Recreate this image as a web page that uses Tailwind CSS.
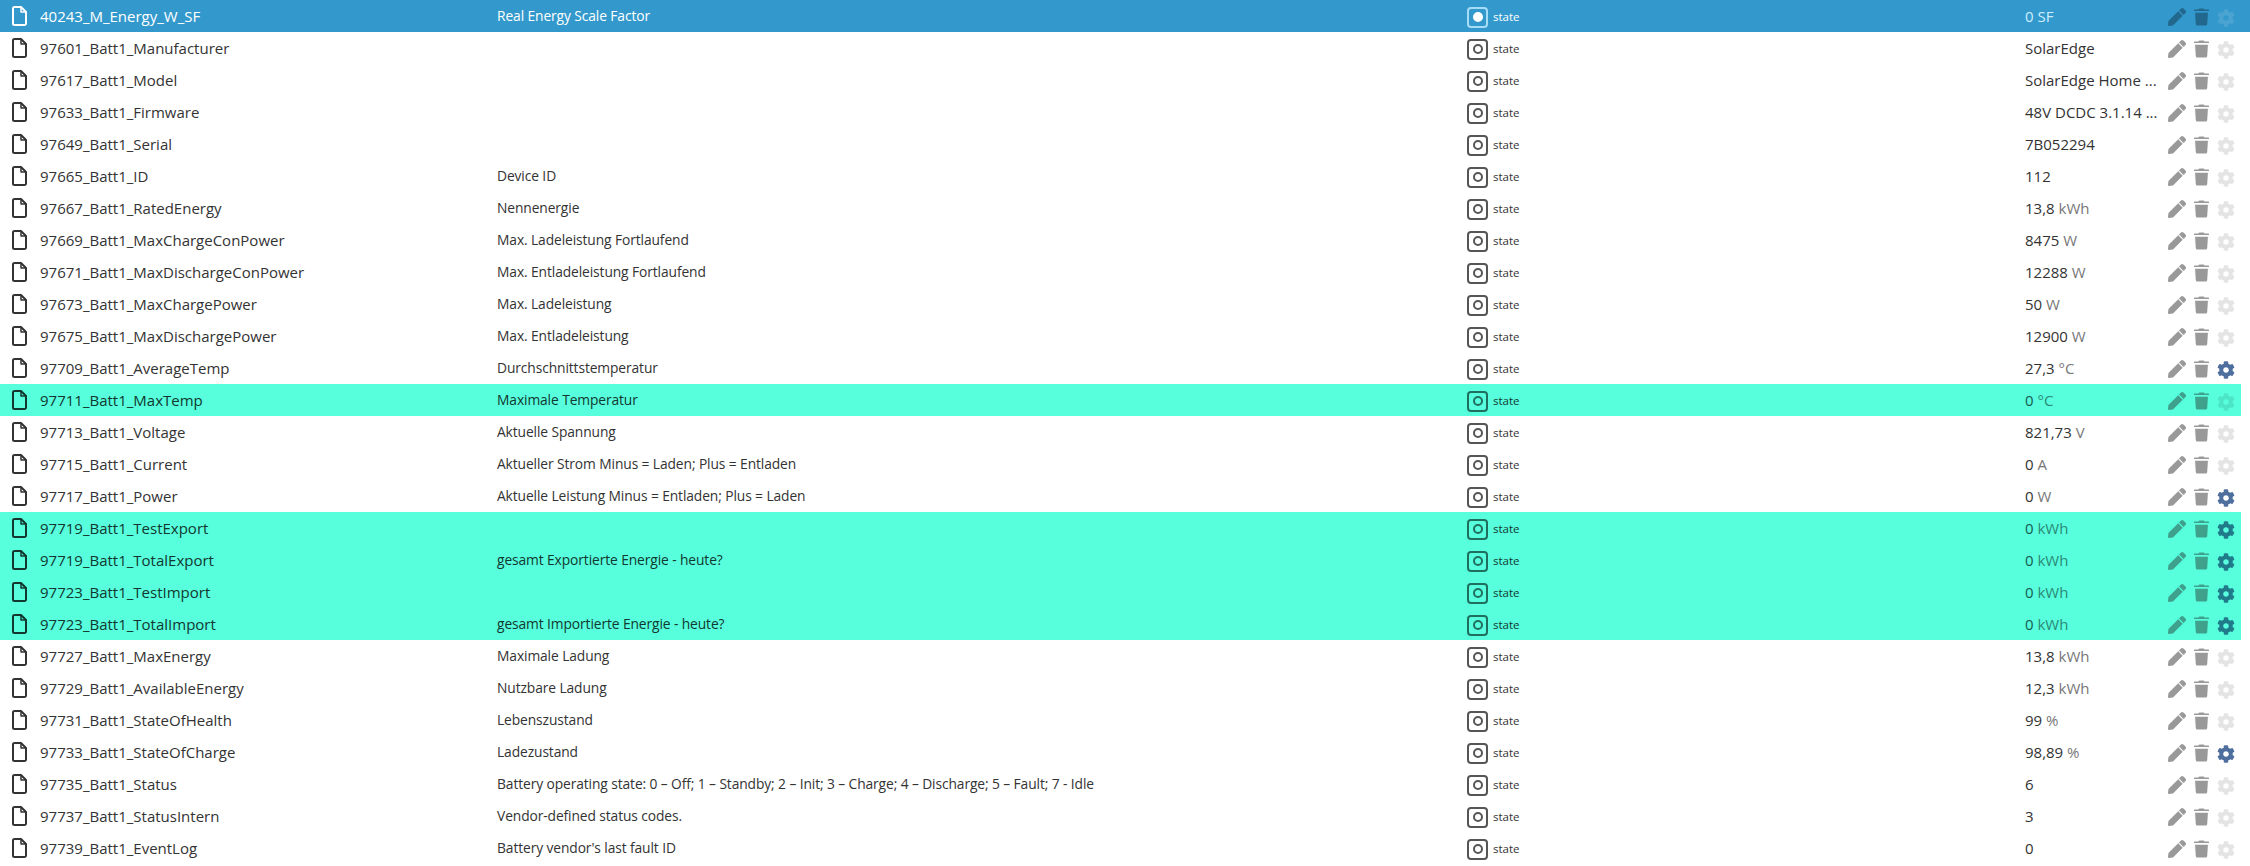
<!DOCTYPE html>
<html lang="en">
<head>
  <meta charset="UTF-8" />
  <title>States</title>
  <script src="https://cdn.jsdelivr.net/npm/@tailwindcss/browser@4"></script>
</head>
<body class="bg-white overflow-hidden font-['Open_Sans',sans-serif] text-[#333]">
  <div id="list" class="flex flex-col"></div>

  <template id="icons">
    <svg data-icon="file" class="w-[15px] h-[20px]" viewBox="0 0 15 20" fill="none" stroke="currentColor" stroke-width="2" stroke-linejoin="round"><path d="M2.500 1h6.500l5 5v11.500a1.500 1.500 0 0 1-1.500 1.500h-10a1.500 1.500 0 0 1-1.500-1.500v-15a1.500 1.500 0 0 1 1.500-1.500z"/><path d="M9 1v5h5" stroke-width="1.500"/></svg>
    <svg data-icon="pen" class="w-[18px] h-[18px]" viewBox="0 0 512 512" fill="currentColor"><path d="M290.700 93.200l128 128-278 278-114.100 12.600C11.300 513.500-1.600 500.600.1 485.300l12.700-114.200 277.900-277.900zm207.200-19.100l-60.100-60.100c-18.700-18.700-49.100-18.700-67.900 0l-56.600 56.600 128 128 56.600-56.600c18.800-18.800 18.800-49.200 0-67.900z"/></svg>
    <svg data-icon="trash" class="w-[15px] h-[18px]" viewBox="0 0 448 512" fill="currentColor"><path d="M432 32H312l-9.400-18.700A24 24 0 0 0 281.100 0H166.800a23.700 23.700 0 0 0-21.400 13.300L136 32H16A16 16 0 0 0 0 48v16a16 16 0 0 0 16 16h416a16 16 0 0 0 16-16V48a16 16 0 0 0-16-16zM53.200 467a48 48 0 0 0 47.900 45h245.800a48 48 0 0 0 47.900-45L416 128H32z"/></svg>
    <svg data-icon="gear" class="w-[18px] h-[18px] mt-[2px]" viewBox="0 0 512 512" fill="currentColor"><path d="M487.400 315.700l-42.600-24.600c4.300-23.200 4.300-47 0-70.200l42.600-24.600c4.900-2.800 7.100-8.600 5.500-14-11.100-35.600-30-67.800-54.700-94.600-3.800-4.100-10-5.100-14.800-2.300L380.800 110c-17.900-15.400-38.500-27.300-60.800-35.100V25.800c0-5.600-3.900-10.500-9.400-11.700-36.700-8.200-74.300-7.800-109.200 0-5.500 1.200-9.400 6.100-9.400 11.700V75c-22.200 7.900-42.800 19.800-60.800 35.100L88.700 85.500c-4.900-2.800-11-1.900-14.800 2.300-24.700 26.700-43.600 58.900-54.700 94.600-1.700 5.400.6 11.200 5.500 14L67.300 221c-4.300 23.200-4.300 47 0 70.200l-42.600 24.600c-4.900 2.800-7.100 8.600-5.500 14 11.100 35.600 30 67.800 54.700 94.600 3.800 4.100 10 5.100 14.800 2.300l42.600-24.600c17.900 15.400 38.500 27.300 60.800 35.100v49.200c0 5.600 3.900 10.500 9.400 11.700 36.700 8.200 74.300 7.800 109.200 0 5.500-1.200 9.400-6.100 9.400-11.700v-49.200c22.200-7.900 42.800-19.800 60.800-35.100l42.600 24.600c4.900 2.800 11 1.900 14.800-2.300 24.700-26.700 43.600-58.900 54.700-94.600 1.500-5.500-.7-11.300-5.600-14.100zM256 336c-44.100 0-80-35.900-80-80s35.900-80 80-80 80 35.900 80 80-35.900 80-80 80z"/></svg>
  </template>

  <script>
    // name, description, value, unit, row kind, gear configured
    const rows = [
      ['40243_M_Energy_W_SF', 'Real Energy Scale Factor', '0', 'SF', 'selected', false],
      ['97601_Batt1_Manufacturer', '', 'SolarEdge', '', '', false],
      ['97617_Batt1_Model', '', 'SolarEdge Home ...', '', '', false],
      ['97633_Batt1_Firmware', '', '48V DCDC 3.1.14 ...', '', '', false],
      ['97649_Batt1_Serial', '', '7B052294', '', '', false],
      ['97665_Batt1_ID', 'Device ID', '112', '', '', false],
      ['97667_Batt1_RatedEnergy', 'Nennenergie', '13,8', 'kWh', '', false],
      ['97669_Batt1_MaxChargeConPower', 'Max. Ladeleistung Fortlaufend', '8475', 'W', '', false],
      ['97671_Batt1_MaxDischargeConPower', 'Max. Entladeleistung Fortlaufend', '12288', 'W', '', false],
      ['97673_Batt1_MaxChargePower', 'Max. Ladeleistung', '50', 'W', '', false],
      ['97675_Batt1_MaxDischargePower', 'Max. Entladeleistung', '12900', 'W', '', false],
      ['97709_Batt1_AverageTemp', 'Durchschnittstemperatur', '27,3', '°C', '', true],
      ['97711_Batt1_MaxTemp', 'Maximale Temperatur', '0', '°C', 'changed', false],
      ['97713_Batt1_Voltage', 'Aktuelle Spannung', '821,73', 'V', '', false],
      ['97715_Batt1_Current', 'Aktueller Strom Minus = Laden; Plus = Entladen', '0', 'A', '', false],
      ['97717_Batt1_Power', 'Aktuelle Leistung Minus = Entladen; Plus = Laden', '0', 'W', '', true],
      ['97719_Batt1_TestExport', '', '0', 'kWh', 'changed', true],
      ['97719_Batt1_TotalExport', 'gesamt Exportierte Energie - heute?', '0', 'kWh', 'changed', true],
      ['97723_Batt1_TestImport', '', '0', 'kWh', 'changed', true],
      ['97723_Batt1_TotalImport', 'gesamt Importierte Energie - heute?', '0', 'kWh', 'changed', true],
      ['97727_Batt1_MaxEnergy', 'Maximale Ladung', '13,8', 'kWh', '', false],
      ['97729_Batt1_AvailableEnergy', 'Nutzbare Ladung', '12,3', 'kWh', '', false],
      ['97731_Batt1_StateOfHealth', 'Lebenszustand', '99', '%', '', false],
      ['97733_Batt1_StateOfCharge', 'Ladezustand', '98,89', '%', '', true],
      ['97735_Batt1_Status', 'Battery operating state: 0 – Off; 1 – Standby; 2 – Init; 3 – Charge; 4 – Discharge; 5 – Fault; 7 - Idle', '6', '', '', false],
      ['97737_Batt1_StatusIntern', 'Vendor-defined status codes.', '3', '', '', false],
      ['97739_Batt1_EventLog', "Battery vendor's last fault ID", '0', '', '', false],
    ]

    const icon = (name, cls) => {
      const svg = document.querySelector('#icons').content.querySelector(`[data-icon="${name}"]`).cloneNode(true)
      svg.classList.add(cls)
      return svg.outerHTML
    }

    document.getElementById('list').innerHTML = rows.map(([name, desc, value, unit, kind, configured]) => {
      const selected = kind === 'selected'
      const changed = kind === 'changed'
      const rowBg = selected ? 'w-full bg-[#3399cc] text-white' : changed ? 'w-[2241px] bg-[#57ffdd] text-[#12372f]' : 'w-[2241px]'
      const box = selected ? 'border-[#a6dcf5]' : changed ? 'border-[#1f6f5f]' : 'border-[#555]'
      const dot = selected ? 'bg-white border-white' : changed ? 'border-[#1f6f5f]' : 'border-[#555]'
      const valueColor = selected ? 'text-[#cdeeff]' : changed ? 'text-[#145c4e]' : ''
      const unitColor = selected ? 'text-[#cdeeff]' : changed ? 'text-[#2a8a76]' : 'text-[#777]'
      const actionColor = selected ? 'text-[#22678d]' : changed ? 'text-[#3fa18c]' : 'text-[#999]'
      let gearColor = 'text-[#e4e4e4]'
      if (selected) gearColor = 'text-[#4aa3d1]'
      else if (changed) gearColor = configured ? 'text-[#1f7a8a]' : 'text-[#4ce6c6]'
      else if (configured) gearColor = 'text-[#4e6f9e]'
      return `<div class="${rowBg} h-8 flex items-center shrink-0">
        <div class="w-10 pl-[12px] flex items-center">${icon('file', 'block')}</div>
        <div class="w-[457px] text-[15px] whitespace-nowrap">${name}</div>
        <div class="w-[970px] text-[13.8px] whitespace-nowrap tracking-[-0.1px] pt-[1px]">${desc}</div>
        <div class="w-[558px] flex items-center gap-[5px] pt-[2px]">
          <span class="w-[21px] h-[21px] rounded-[4px] border-2 ${box} flex items-center justify-center">
            <span class="w-[10px] h-[10px] rounded-full border-2 ${dot}"></span>
          </span>
          <span class="text-[11.5px]">state</span>
        </div>
        <div class="w-[143px] text-[15px] whitespace-nowrap ${valueColor}">${value}${unit ? ` <span class="${unitColor}">${unit}</span>` : ''}</div>
        <div class="flex items-center gap-[8px] pt-[1px]">
          ${icon('pen', actionColor)}${icon('trash', actionColor)}${icon('gear', gearColor)}
        </div>
      </div>`
    }).join('')
  </script>
</body>
</html>
